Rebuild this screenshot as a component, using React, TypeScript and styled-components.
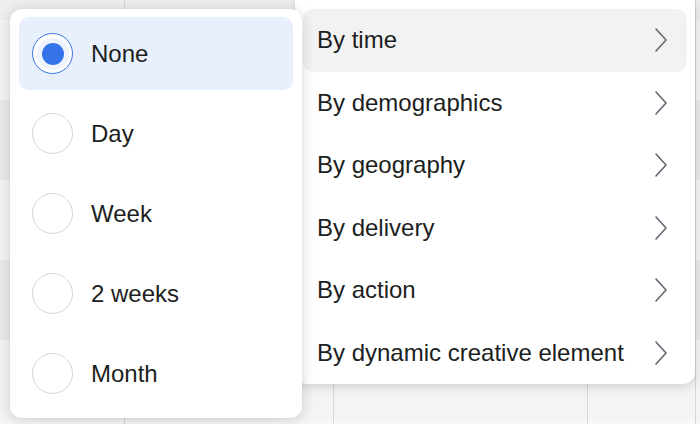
import React from 'react';
import styled, { createGlobalStyle } from 'styled-components';

const GlobalStyle = createGlobalStyle`
  html, body {
    margin: 0;
    padding: 0;
    width: 700px;
    height: 424px;
    overflow: hidden;
    background: #f4f4f5;
    font-family: "Liberation Sans", Arial, sans-serif;
  }
`;

const Page = styled.div`
  position: relative;
  width: 700px;
  height: 424px;
  overflow: hidden;
`;

// table sitting behind the menus
const Table = styled.div`
  display: flex;
  flex-direction: column;
  height: 100%;
`;

const Row = styled.div<{ $tone: string; $h: string }>`
  display: grid;
  grid-template-columns: 125px 209px 254px 108px 1fr;
  height: ${(p) => p.$h};
  flex: ${(p) => (p.$h === 'auto' ? 1 : 'none')};
  background: ${(p) => p.$tone};
`;

const Cell = styled.div`
  border-right: 1px solid #d6d7da;
  &:last-child {
    border-right: none;
  }
`;

const LeftMenu = styled.div`
  position: absolute;
  left: 10px;
  top: 9px;
  width: 292px;
  box-sizing: border-box;
  padding: 8px 9px;
  background: #fff;
  border-radius: 12px;
  box-shadow: 0 2px 14px rgba(0, 0, 0, 0.16), 0 0 2px rgba(0, 0, 0, 0.06);
  display: flex;
  flex-direction: column;
  gap: 7px;
  z-index: 2;
`;

const Option = styled.div<{ $active?: boolean }>`
  height: 73px;
  display: flex;
  align-items: center;
  gap: 18px;
  padding-left: 13px;
  border-radius: 10px;
  background: ${(p) => (p.$active ? '#e9f0fd' : 'transparent')};
  font-size: 24px;
  color: #1c1e21;
`;

const Radio = styled.span<{ $checked?: boolean }>`
  position: relative;
  width: 41px;
  height: 41px;
  box-sizing: border-box;
  border-radius: 50%;
  flex: none;
  background: #fff;
  border: 1.5px solid ${(p) => (p.$checked ? '#3a73e6' : '#d3d5d9')};
  &::after {
    content: '';
    display: ${(p) => (p.$checked ? 'block' : 'none')};
    position: absolute;
    left: 50%;
    top: 50%;
    width: 22px;
    height: 22px;
    margin: -11px 0 0 -11px;
    border-radius: 50%;
    background: #3474e8;
    box-shadow: 0 0 0 5px #eef3fd;
  }
`;

const RightMenu = styled.div`
  position: absolute;
  left: 295px;
  top: 0;
  width: 400px;
  box-sizing: border-box;
  padding: 9px 8px 0;
  background: #fff;
  border-radius: 0 0 12px 12px;
  box-shadow: 0 3px 12px rgba(0, 0, 0, 0.14), 0 0 2px rgba(0, 0, 0, 0.06);
  z-index: 1;
`;

const Item = styled.div<{ $active?: boolean }>`
  height: 62.5px;
  display: flex;
  align-items: center;
  justify-content: space-between;
  padding: 0 19px 0 14px;
  border-radius: 10px;
  background: ${(p) => (p.$active ? '#f2f2f2' : 'transparent')};
  font-size: 24px;
  color: #1c1e21;
`;

const Chevron = () => (
  <svg width="14" height="26" viewBox="0 0 14 26" fill="none">
    <path d="M2 2 L12 13 L2 24" stroke="#606770" strokeWidth="1.6" strokeLinecap="round" strokeLinejoin="round" />
  </svg>
);

const periods = ['None', 'Day', 'Week', '2 weeks', 'Month'];
const breakdowns = [
  'By time',
  'By demographics',
  'By geography',
  'By delivery',
  'By action',
  'By dynamic creative element',
];

const rows: { tone: string; h: string }[] = [
  { tone: '#eceef0', h: '20px' },
  { tone: '#f4f4f5', h: '80px' },
  { tone: '#e9eaec', h: '80px' },
  { tone: '#f4f4f5', h: '80px' },
  { tone: '#e9eaec', h: '80px' },
  { tone: '#f4f4f5', h: '80px' },
  { tone: '#f7f7f8', h: 'auto' },
];

export default function App() {
  return (
    <Page>
      <GlobalStyle />
      <Table>
        {rows.map((r, i) => (
          <Row key={i} $tone={r.tone} $h={r.h}>
            <Cell />
            <Cell />
            <Cell />
            <Cell />
            <Cell />
          </Row>
        ))}
      </Table>

      <LeftMenu>
        {periods.map((p, i) => (
          <Option key={p} $active={i === 0}>
            <Radio $checked={i === 0} />
            {p}
          </Option>
        ))}
      </LeftMenu>

      <RightMenu>
        {breakdowns.map((b, i) => (
          <Item key={b} $active={i === 0}>
            <span>{b}</span>
            <Chevron />
          </Item>
        ))}
      </RightMenu>
    </Page>
  );
}
